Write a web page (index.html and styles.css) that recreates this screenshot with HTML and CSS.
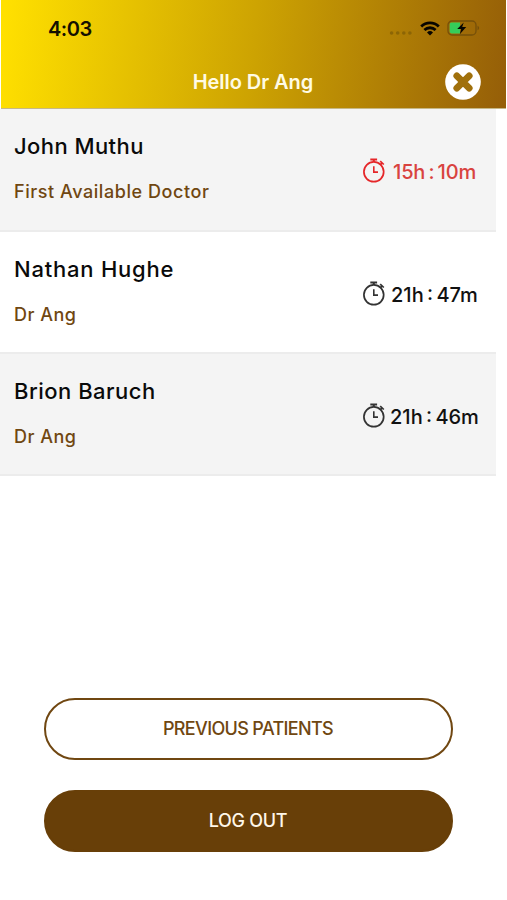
FILE: index.html
```html
<!DOCTYPE html>
<html lang="en">
<head>
<meta charset="utf-8">
<title>Patients</title>
<link rel="stylesheet" href="styles.css">
</head>
<body>
<svg class="defs" aria-hidden="true">
  <symbol id="stopwatch" viewBox="0 0 24 26">
    <g fill="none" stroke="currentColor">
      <circle cx="11.8" cy="14.8" r="9.9" stroke-width="1.7"/>
      <path d="M8.3 2.5h6.8M11.8 2.5v2.6" stroke-width="2"/>
      <path d="M18.2 7.9l2-2.1M18.2 4.1l3.6 3.4" stroke-width="1.7"/>
      <path d="M11.8 9.2v5.9h4.2" stroke-width="1.6"/>
    </g>
  </symbol>
</svg>
<header class="header">
  <div class="status">
    <span class="clock">4:03</span>
    <svg class="dots" viewBox="0 0 24 6"><g fill="#7b5a05" opacity=".65"><circle cx="2.6" cy="3" r="1.8"/><circle cx="8.7" cy="3" r="1.8"/><circle cx="14.8" cy="3" r="1.8"/><circle cx="20.9" cy="3" r="1.8"/></g></svg>
    <svg class="wifi" viewBox="0 0 20 15"><g fill="none" stroke="#080500" stroke-width="2.8"><path d="M1.2 5.5a12.6 12.6 0 0 1 17.6 0"/><path d="M4.4 9a8.1 8.1 0 0 1 11.2 0"/></g><path d="M10 14.5l-3-3a4.4 4.4 0 0 1 6 0z" fill="#080500"/></svg>
    <svg class="battery" viewBox="0 0 33 16"><rect x="1" y="1" width="28" height="14" rx="4" fill="none" stroke="#76500a" stroke-width="1.3"/><path d="M30.5 5.8c2.2.8 2.2 3.6 0 4.4z" fill="#76500a"/><path d="M4.5 2.6H13v10.8H4.5a1.8 1.8 0 0 1-1.8-1.8V4.4a1.8 1.8 0 0 1 1.8-1.8z" fill="#35cc59"/><path d="M16.7 2.4L10.2 9h4l-1.4 5.2L19.2 7h-4z" fill="#080500"/></svg>
  </div>
  <div class="titlebar">
    <h1 class="title">Hello Dr Ang</h1>
    <svg class="close" viewBox="0 0 36 36" role="img" aria-label="Close"><circle cx="18" cy="18" r="17.8" fill="#fff"/><path d="M11.8 11.8l12.4 12.4M24.2 11.8L11.8 24.2" stroke="#a0700b" stroke-width="6.8" stroke-linecap="round"/></svg>
  </div>
</header>
<main class="list">
  <section class="row shaded">
    <div><h2 class="name john">John Muthu</h2><p class="doctor first">First Available Doctor</p></div>
    <div class="wait late"><svg class="watch"><use href="#stopwatch"/></svg><span class="time t1">15h : 10m</span></div>
  </section>
  <section class="row">
    <div><h2 class="name nathan">Nathan Hughe</h2><p class="doctor">Dr Ang</p></div>
    <div class="wait"><svg class="watch"><use href="#stopwatch"/></svg><span class="time t2">21h : 47m</span></div>
  </section>
  <section class="row shaded">
    <div><h2 class="name brion">Brion Baruch</h2><p class="doctor">Dr Ang</p></div>
    <div class="wait"><svg class="watch"><use href="#stopwatch"/></svg><span class="time t3">21h : 46m</span></div>
  </section>
</main>
<footer class="actions">
  <button class="button outline">PREVIOUS PATIENTS</button>
  <button class="button solid">LOG OUT</button>
</footer>
</body>
</html>
```
FILE: styles.css
```css
* { box-sizing: border-box; }
body { margin: 0; width: 507px; height: 900px; background: #fff; font-family: Inter, sans-serif; color: #0a0a0a; overflow: hidden; }
h1, h2, p { margin: 0; }
.defs { display: none; }
.header { width: 505px; height: 109px; margin-left: 1px; background: linear-gradient(97deg, #ffe000 1%, #cda302 50%, #955e08 100%); border-bottom: 1px solid #c6b887; }
.status { display: flex; height: 56px; padding: 0 26px 0 47px; align-items: center; }
.clock { font-size: 20px; font-weight: 600; line-height: 24px; margin: 2px auto 0 0; color: #141000; letter-spacing: -.5px; }
.dots { width: 24px; height: 6px; margin: 9px 7px 0 0; }
.wifi { width: 20px; height: 15px; margin-right: 7px; }
.battery { width: 33px; height: 16px; }
.titlebar { display: grid; grid-template-columns: 1fr 36px; padding-right: 25px; height: 52px; align-items: center; }
.title { font-size: 20px; font-weight: 600; color: #fffbe4; padding-left: 60px; text-align: center; line-height: 24px; letter-spacing: -.05px; }
.close { width: 36px; height: 36px; }
.list { width: 496px; }
.row { display: flex; justify-content: space-between; height: 122px; padding-left: 14px; border-bottom: 2px solid #ececec; background: #fff; }
.row:nth-child(1) { height: 123px; }
.shaded { background: #f4f4f4; }
.name { font-size: 22px; line-height: 30px; font-weight: 500; margin-top: 22px; white-space: nowrap; }
.john { letter-spacing: .43px; }
.nathan { letter-spacing: .78px; }
.brion { letter-spacing: .5px; }
.doctor { font-size: 18px; line-height: 26px; font-weight: 500; color: #704711; margin-top: 18px; white-space: nowrap; letter-spacing: .5px; }
.first { letter-spacing: .56px; }
.wait { display: flex; width: 134px; height: 30px; margin-top: 48px; align-items: center; color: #111; }
.watch { width: 24px; height: 26px; flex: none; margin-top: -4px; color: #333; }
.time { font-size: 20px; line-height: 30px; font-weight: 500; white-space: nowrap; word-spacing: -2px; }
.late { color: #d9433f; }
.late .watch { color: #e52629; }
.t1 { margin-left: 7px; letter-spacing: -.15px; }
.t2 { margin-left: 5px; }
.t3 { margin-left: 4px; }
.actions { display: flex; flex-direction: column; gap: 30px; width: 409px; margin: 222px 0 0 43.5px; }
.button { height: 62px; border-radius: 31px; border: 2px solid #704711; background: #fff; color: #704711; font: 500 18px/24px Inter, sans-serif; padding: 0; letter-spacing: -.65px; }
.solid { background: #683f08; color: #fff7e9; border-color: #683f08; letter-spacing: -.3px; }
```
